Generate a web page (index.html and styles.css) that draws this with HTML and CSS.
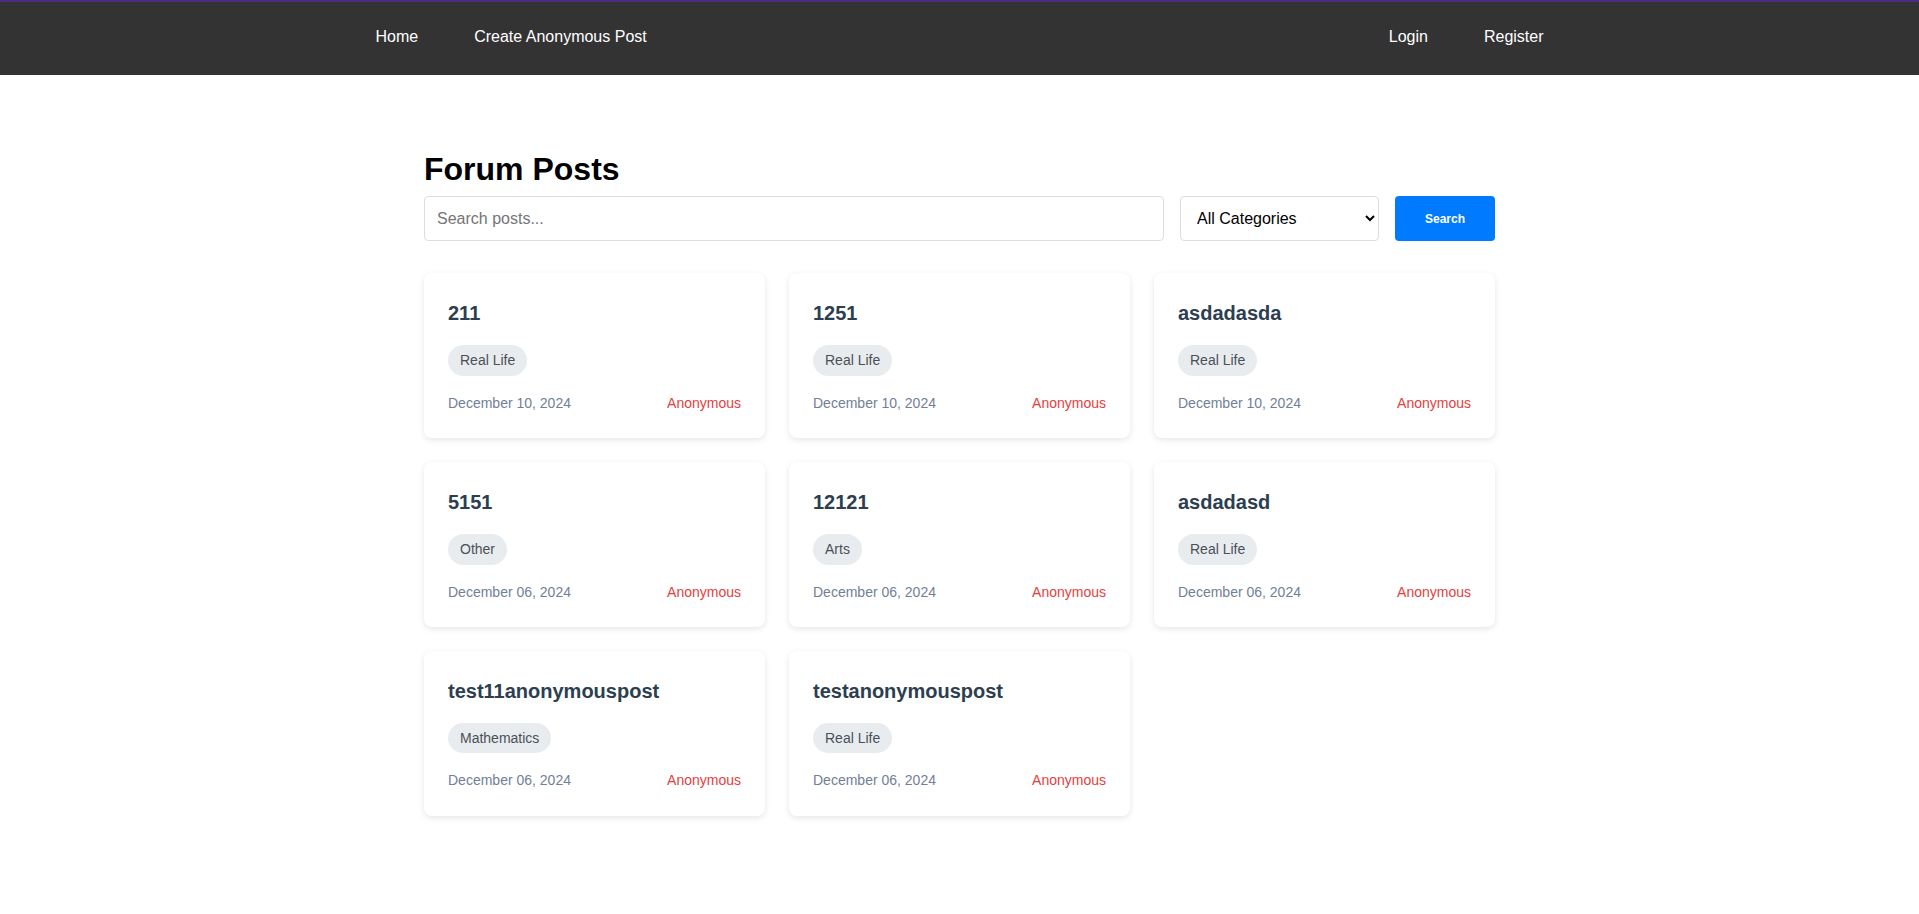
FILE: index.html
```html
<!DOCTYPE html>
<html lang="en">
<head>
<meta charset="utf-8">
<title>Forum Posts</title>
<link rel="stylesheet" href="styles.css">
</head>
<body>
<nav class="navbar">
  <div class="nav-inner">
    <div class="nav-group">
      <a class="nav-link" href="#">Home</a>
      <a class="nav-link" href="#">Create Anonymous Post</a>
    </div>
    <div class="nav-group">
      <a class="nav-link" href="#">Login</a>
      <a class="nav-link" href="#">Register</a>
    </div>
  </div>
</nav>
<main class="main">
  <h1 class="page-title">Forum Posts</h1>
  <form class="search-row">
    <input class="search-input" type="text" placeholder="Search posts...">
    <select class="category-select">
      <option>All Categories</option>
      <option>Real Life</option>
      <option>Other</option>
      <option>Arts</option>
      <option>Mathematics</option>
    </select>
    <button class="search-btn" type="button">Search</button>
  </form>
  <div class="posts-grid">
    <div class="post-card">
      <h3 class="post-title">211</h3>
      <span class="tag">Real Life</span>
      <div class="post-meta"><span class="date">December 10, 2024</span><span class="author">Anonymous</span></div>
    </div>
    <div class="post-card">
      <h3 class="post-title">1251</h3>
      <span class="tag">Real Life</span>
      <div class="post-meta"><span class="date">December 10, 2024</span><span class="author">Anonymous</span></div>
    </div>
    <div class="post-card">
      <h3 class="post-title">asdadasda</h3>
      <span class="tag">Real Life</span>
      <div class="post-meta"><span class="date">December 10, 2024</span><span class="author">Anonymous</span></div>
    </div>
    <div class="post-card">
      <h3 class="post-title">5151</h3>
      <span class="tag">Other</span>
      <div class="post-meta"><span class="date">December 06, 2024</span><span class="author">Anonymous</span></div>
    </div>
    <div class="post-card">
      <h3 class="post-title">12121</h3>
      <span class="tag">Arts</span>
      <div class="post-meta"><span class="date">December 06, 2024</span><span class="author">Anonymous</span></div>
    </div>
    <div class="post-card">
      <h3 class="post-title">asdadasd</h3>
      <span class="tag">Real Life</span>
      <div class="post-meta"><span class="date">December 06, 2024</span><span class="author">Anonymous</span></div>
    </div>
    <div class="post-card">
      <h3 class="post-title">test11anonymouspost</h3>
      <span class="tag">Mathematics</span>
      <div class="post-meta"><span class="date">December 06, 2024</span><span class="author">Anonymous</span></div>
    </div>
    <div class="post-card">
      <h3 class="post-title">testanonymouspost</h3>
      <span class="tag">Real Life</span>
      <div class="post-meta"><span class="date">December 06, 2024</span><span class="author">Anonymous</span></div>
    </div>
  </div>
</main>
</body>
</html>
```

FILE: styles.css
```css
* {
  box-sizing: border-box;
}

body {
  margin: 0;
  font-family: "Liberation Sans", Arial, sans-serif;
  background: #ffffff;
  color: #000000;
  line-height: 1.6;
}

.navbar {
  background: #333333;
  border-top: 2px solid #4a2a82;
}

.nav-inner {
  max-width: 1200px;
  margin: 0 auto;
  padding: 26px 16px 29px;
  display: flex;
  justify-content: space-between;
  align-items: center;
}

.nav-group {
  display: flex;
  gap: 56px;
}

.nav-link {
  color: #ffffff;
  text-decoration: none;
  font-size: 16px;
  line-height: 18px;
}

.main {
  width: 1071px;
  margin: 0 auto;
  padding: 75px 0 60px;
}

.page-title {
  margin: 0 0 8px;
  font-size: 32px;
  line-height: 1.2;
  font-weight: bold;
  color: #000000;
}

.search-row {
  display: flex;
  gap: 16px;
  margin: 0 0 32px;
}

.search-input {
  flex: 1;
  height: 45px;
  padding: 0 12px;
  border: 1px solid #dddddd;
  border-radius: 4px;
  font-family: "Liberation Sans", Arial, sans-serif;
  font-size: 16px;
  color: #333333;
}

.search-input::placeholder {
  color: #757575;
}

.category-select {
  width: 199px;
  height: 45px;
  padding: 0 8px 0 12px;
  border: 1px solid #dddddd;
  border-radius: 4px;
  background: #ffffff;
  font-family: "Liberation Sans", Arial, sans-serif;
  font-size: 16px;
  color: #000000;
}

.search-btn {
  width: 100px;
  height: 45px;
  border: none;
  border-radius: 4px;
  background: #007bff;
  color: #ffffff;
  font-family: "Liberation Sans", Arial, sans-serif;
  font-size: 12px;
  font-weight: bold;
}

.posts-grid {
  display: grid;
  grid-template-columns: repeat(3, 1fr);
  gap: 24px;
}

.post-card {
  background: #ffffff;
  border-radius: 8px;
  padding: 24px;
  box-shadow: 0 2px 6px rgba(0, 0, 0, 0.1);
  display: flex;
  flex-direction: column;
  align-items: flex-start;
}

.post-title {
  margin: 0 0 16px;
  font-size: 20px;
  line-height: 32px;
  font-weight: bold;
  color: #2c3e50;
}

.tag {
  display: inline-block;
  padding: 4px 12px;
  border-radius: 16px;
  background: #e9ecef;
  color: #495057;
  font-size: 14px;
  line-height: 22.4px;
  margin-bottom: 16px;
}

.post-meta {
  align-self: stretch;
  display: flex;
  justify-content: space-between;
  font-size: 14px;
  line-height: 22.4px;
}

.date {
  color: #718096;
}

.author {
  color: #e53e3e;
}
```
